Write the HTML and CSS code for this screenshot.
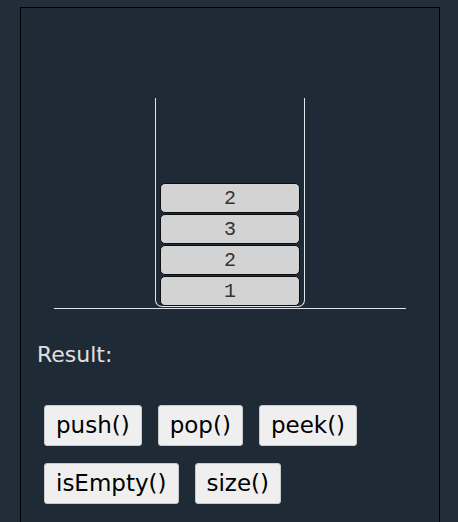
FILE: index.html
```html
<!DOCTYPE html>
<html>
<head>
<meta charset="utf-8">
<link rel="stylesheet" href="styles.css">
</head>
<body>
<div class="panel">
  <div class="stage">
    <div class="tube">
      <div class="item">2</div>
      <div class="item">3</div>
      <div class="item">2</div>
      <div class="item">1</div>
    </div>
    <div class="ground"></div>
  </div>
  <div class="result">Result:</div>
  <div class="buttons">
    <button class="btn">push()</button>
    <button class="btn">pop()</button>
    <button class="btn">peek()</button>
    <button class="btn">isEmpty()</button>
    <button class="btn">size()</button>
  </div>
</div>
</body>
</html>
```
FILE: styles.css
```css
html, body {
  margin: 0;
  background: #212d38;
  height: 100%;
  overflow: hidden;
}
body {
  box-sizing: border-box;
  padding: 7px 0 0 20px;
  font-family: "DejaVu Sans", Verdana, sans-serif;
}
.panel {
  box-sizing: border-box;
  width: 420px;
  height: 515px;
  border: 1px solid #000;
  border-bottom: none;
  background: #1e2a35;
}
.stage {
  display: flex;
  flex-direction: column;
  align-items: center;
  padding-top: 90px;
}
.tube {
  box-sizing: border-box;
  width: 150px;
  height: 209px;
  border: 1px solid #dfe4e8;
  border-top: none;
  border-radius: 0 0 7px 7px;
  display: flex;
  flex-direction: column;
  justify-content: flex-end;
  align-items: center;
}
.item {
  box-sizing: border-box;
  width: 140px;
  height: 30px;
  margin-top: 1px;
  background: #d3d3d3;
  border: 1px solid #0b0f12;
  border-radius: 5px;
  font-family: "Liberation Mono", "DejaVu Sans Mono", monospace;
  font-size: 20px;
  color: #333;
  display: flex;
  align-items: center;
  justify-content: center;
}
.ground {
  width: 352px;
  height: 1px;
  margin-top: 1px;
  background: #dfe4e8;
}
.result {
  color: #e0e0e0;
  font-size: 22px;
  padding: 33px 0 0 16px;
}
.buttons {
  display: flex;
  flex-wrap: wrap;
  gap: 17px 16px;
  padding: 38px 0 0 23px;
  width: 340px;
}
.btn {
  font-family: "DejaVu Sans", Verdana, sans-serif;
  font-size: 23px;
  color: #000;
  background: #efefef;
  border: 1px solid #c9c9c9;
  border-radius: 3px;
  padding: 7px 11px;
  height: 41px;
  line-height: 25px;
}
```
